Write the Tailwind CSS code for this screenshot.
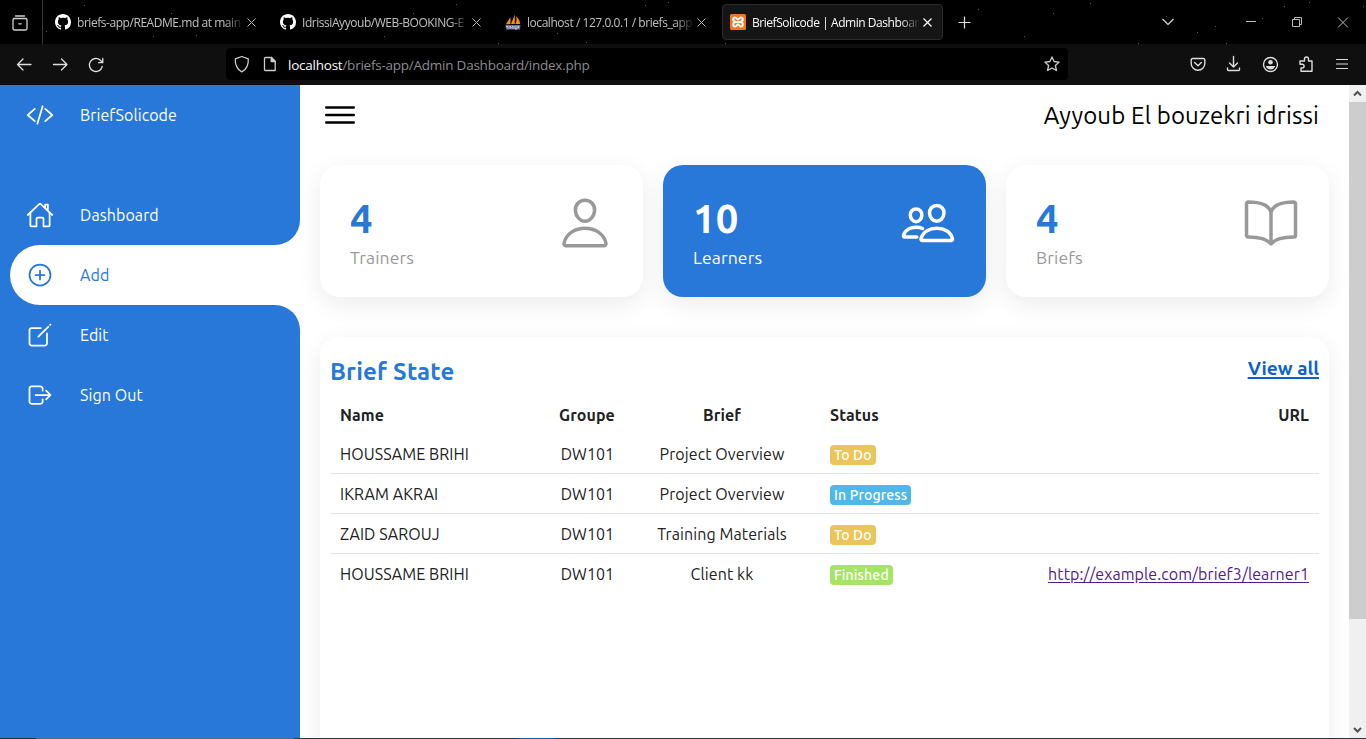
<!DOCTYPE html>
<html lang="en">
<head>
<meta charset="utf-8">
<title>BriefSolicode | Admin Dashboard</title>
<script src="https://cdn.jsdelivr.net/npm/@tailwindcss/browser@4"></script>
</head>
<body class="w-[1366px] h-[739px] overflow-hidden bg-white font-['Ubuntu','Noto_Sans',sans-serif] text-[16px] tracking-[0.09px] text-[#222] flex flex-col">
<header class="relative h-[85px] shrink-0 bg-black font-['Segoe_UI','Open_Sans',sans-serif]">
  <div class="flex h-11 text-[#fbfbfe]/75 text-[12px] tracking-[-0.45px]">
    <div class="w-[43px] border-r border-[#38383d] flex items-center justify-center pr-0.5">
      <svg class="size-4 mt-px" viewBox="0 0 16 16" fill="none" stroke="#d0d0d0" stroke-width="1.3" stroke-linecap="round"><path d="M3.500 1h9"/><path d="M1 5.500V5a1.500 1.500 0 0 1 1.500-1.500h11A1.500 1.500 0 0 1 15 5v8.500a1.500 1.500 0 0 1-1.500 1.500h-11A1.500 1.500 0 0 1 1 13.500zM6.800 8.800h2.400"/></svg>
    </div>
    <div class="flex gap-1 pl-1 pt-1">
      <div class="w-[221px] h-9 flex items-center pl-2 pr-2.5">
        <svg class="size-4 shrink-0" viewBox="0 0 16 16" fill="#fff"><path d="M8 0C3.58 0 0 3.58 0 8c0 3.54 2.29 6.53 5.47 7.59.4.07.55-.17.55-.38 0-.19-.01-.82-.01-1.49-2.01.37-2.53-.49-2.69-.94-.09-.23-.48-.94-.82-1.13-.28-.15-.68-.52-.01-.53.63-.01 1.08.58 1.23.82.72 1.21 1.87.87 2.33.66.07-.52.28-.87.51-1.07-1.78-.2-3.64-.89-3.64-3.95 0-.87.31-1.59.82-2.15-.08-.2-.36-1.02.08-2.12 0 0 .67-.21 2.2.82.64-.18 1.32-.27 2-.27s1.36.09 2 .27c1.53-1.04 2.2-.82 2.2-.82.44 1.1.16 1.92.08 2.12.51.56.82 1.27.82 2.15 0 3.07-1.87 3.75-3.65 3.95.29.25.54.73.54 1.48 0 1.07-.01 1.93-.01 2.2 0 .21.15.46.55.38A8.01 8.01 0 0016 8c0-4.42-3.58-8-8-8z"/></svg>
        <div class="ml-1.5 pt-0.5 w-[168px] shrink-0 overflow-hidden whitespace-nowrap mask-r-from-88%"><span>briefs-app/README.md at main</span></div>
        <svg class="size-[9px] shrink-0 ml-0.5" viewBox="0 0 9 9" stroke="#bbb"><path d="M.5.5l8 8M8.5.5l-8 8"/></svg>
      </div>
      <div class="w-[221px] h-9 flex items-center pl-2 pr-2.5">
        <svg class="size-4 shrink-0" viewBox="0 0 16 16" fill="#fff"><path d="M8 0C3.58 0 0 3.58 0 8c0 3.54 2.29 6.53 5.47 7.59.4.07.55-.17.55-.38 0-.19-.01-.82-.01-1.49-2.01.37-2.53-.49-2.69-.94-.09-.23-.48-.94-.82-1.13-.28-.15-.68-.52-.01-.53.63-.01 1.08.58 1.23.82.72 1.21 1.87.87 2.33.66.07-.52.28-.87.51-1.07-1.78-.2-3.64-.89-3.64-3.95 0-.87.31-1.59.82-2.15-.08-.2-.36-1.02.08-2.12 0 0 .67-.21 2.2.82.64-.18 1.32-.27 2-.27s1.36.09 2 .27c1.53-1.04 2.2-.82 2.2-.82.44 1.1.16 1.92.08 2.12.51.56.82 1.27.82 2.15 0 3.07-1.87 3.75-3.65 3.95.29.25.54.73.54 1.48 0 1.07-.01 1.93-.01 2.2 0 .21.15.46.55.38A8.01 8.01 0 0016 8c0-4.42-3.58-8-8-8z"/></svg>
        <div class="ml-1.5 pt-0.5 w-[168px] shrink-0 overflow-hidden whitespace-nowrap mask-r-from-88%"><span>IdrissiAyyoub/WEB-BOOKING-E</span></div>
        <svg class="size-[9px] shrink-0 ml-0.5" viewBox="0 0 9 9" stroke="#bbb"><path d="M.5.5l8 8M8.5.5l-8 8"/></svg>
      </div>
      <div class="w-[221px] h-9 flex items-center pl-2 pr-2.5">
        <svg class="size-4 shrink-0" viewBox="0 0 16 16"><path d="M.8 10.500L5.500 3v7zM6 10L9.800 .5v9.500zM10.300 10c1.500-2.500 1.500-5 .5-8 3 2.500 4 5 4.300 8z" fill="#f29111"/><path d="M.5 11h15l-.5 4.500H1z" fill="#6c7093"/><path d="M1 12.500h2v2M5 15v-3l1.500 1.500L8 12v3M10 12v3h2v-3M13.500 12v2" stroke="#c3c5d8" fill="none"/></svg>
        <div class="ml-1.5 pt-0.5 w-[168px] shrink-0 overflow-hidden whitespace-nowrap mask-r-from-88%"><span>localhost / 127.0.0.1 / briefs_app</span></div>
        <svg class="size-[9px] shrink-0 ml-0.5" viewBox="0 0 9 9" stroke="#bbb"><path d="M.5.5l8 8M8.5.5l-8 8"/></svg>
      </div>
      <div class="w-[221px] h-9 flex items-center pl-[7px] pr-2.5 rounded bg-[#151515] border border-[#2a2a2a] text-[#fbfbfe]">
        <svg class="size-4 shrink-0" viewBox="0 0 16 16"><rect width="16" height="16" rx="1.5" fill="#f37623"/><path d="M6.400 8H9.600M6.400 8C4.500 8 3.200 7.200 3.200 5.600S4.200 3.500 5.200 3.500C7 3.500 6.600 5.600 8 5.600S9 3.500 10.800 3.500C12 3.500 12.800 4.300 12.800 5.600S11.500 8 9.600 8c1.900 0 3.200.8 3.200 2.400s-1 2.100-2 2.100c-1.800 0-1.400-2.100-2.800-2.100s-1 2.100-2.800 2.100c-1.200 0-2-.8-2-2.100S4.500 8 6.400 8z" fill="none" stroke="#fff" stroke-width="1.900"/></svg>
        <div class="ml-1.5 pt-0.5 w-[168px] shrink-0 overflow-hidden whitespace-nowrap mask-r-from-88%"><span>BriefSolicode | Admin Dashboar</span></div>
        <svg class="size-[9px] shrink-0 ml-[3px]" viewBox="0 0 9 9" stroke="#fff" stroke-width="1.2"><path d="M.5.5l8 8M8.500.5l-8 8"/></svg>
      </div>
    </div>
    <svg class="w-[420px] h-11 shrink-0" viewBox="943 0 420 44" fill="none" stroke="#ddd"><path d="M958.500 22.500h12M964.500 16.500v12" stroke-width="1.200"/><path d="M1162.500 19l5.500 5.500 5.500-5.500" stroke-width="1.200"/><path d="M1246 21.500h10M1292.500 19.500h7v7h-7zM1294.500 19.500v-2h7v7h-2M1338 17.500l10 10M1348 17.500l-10 10" stroke="#bbb"/></svg>
  </div>
  <div class="h-[41px] bg-[#0f0f0f] flex items-center">
    <svg class="w-[226px] h-[41px]" viewBox="0 44 226 41" fill="none" stroke="#ddd" stroke-width="1.300" stroke-linecap="round" stroke-linejoin="round"><path d="M31 64.500H17.500M23 59l-5.500 5.500L23 70M53.500 64.500H67M61.500 59l5.500 5.500-5.500 5.500M102.200 66.500a6.500 6.500 0 1 1-1.800-6.200l2 2M102.800 58.500v4.200h-4.200"/></svg>
    <div class="w-[842px] h-8 rounded bg-black flex items-center text-[13.5px] tracking-[-0.24px] -mt-px">
      <svg class="w-[62px] h-8 shrink-0" viewBox="226 48 62 32" fill="none" stroke="#ccc" stroke-width="1.300" stroke-linejoin="round"><path d="M241.800 56.500l6.500 2.300c.3 5.500-1.500 10.500-6.500 13-5-2.500-6.800-7.500-6.500-13z"/><path d="M265.500 57.500h6l3.700 3.700v9.300h-9.700a1 1 0 0 1-1-1V58.500a1 1 0 0 1 1-1z"/><path d="M271.200 57.500v4h4z" fill="#ccc"/></svg>
      <span class="flex-1 pt-0.5 text-[#8b8b90] whitespace-nowrap"><span class="text-[#fbfbfe]">localhost</span>/briefs-app/Admin Dashboard/index.php</span>
      <svg class="size-4 mr-2" viewBox="0 0 16 16" fill="none" stroke="#ccc" stroke-width="1.300" stroke-linejoin="round"><path d="M8 .9l2.100 4.600 5 .6-3.700 3.400 1 5L8 12l-4.400 2.500 1-5L.9 6.100l5-.6z"/></svg>
    </div>
    <svg class="w-[298px] h-[41px]" viewBox="1068 44 298 41" fill="none" stroke="#ddd" stroke-width="1.400" stroke-linecap="round" stroke-linejoin="round"><path d="M1192.500 58.500h11a1.300 1.300 0 0 1 1.300 1.300v3.700a6.800 6.800 0 0 1-13.600 0v-3.700a1.300 1.300 0 0 1 1.300-1.300zM1194.600 62.500l3.400 3.200 3.400-3.200M1233.500 56.500v10M1229.500 63l4 4 4-4M1227.500 68v1.500a1 1 0 0 0 1 1h10a1 1 0 0 0 1-1V68"/><circle cx="1270.500" cy="64.500" r="7"/><circle cx="1270.500" cy="62.300" r="2.300" fill="#ddd" stroke="none"/><path d="M1266 66h9c-.3 2.300-2 3.500-4.500 3.500s-4.200-1.200-4.500-3.500z" fill="#ddd" stroke="none"/><path d="M1301 61h3.500v-2a2 2 0 0 1 4 0v2h3.500v10.300h-11v-3.300h1.200a1.900 1.900 0 0 0 0-3.800h-2.200V61z"/><path d="M1336.500 59.500h11M1336.500 64h11M1336.500 68.500h11" stroke-width="1.200"/></svg>
  </div>
  <svg class="absolute inset-0 w-[1366px] h-[85px]" viewBox="0 0 1366 85" fill="#555"><path d="M84 5h1v1h-1zM171 13h1v1h-1zM46 31h1v1h-1zM153 36h1v1h-1zM196 35h1v1h-1zM376 27h1v1h-1zM384 36h1v1h-1zM413 13h1v1h-1zM456 4h1v1h-1zM498 43h1v1h-1zM557 33h1v1h-1zM586 42h1v1h-1zM645 5h1v1h-1zM668 2h1v1h-1zM725 43h1v1h-1zM978 9h1v1h-1zM1024 36h1v1h-1zM1053 13h1v1h-1zM1090 3h1v1h-1zM1138 43h1v1h-1zM1166 16h1v1h-1zM1197 32h1v1h-1zM1215 26h1v1h-1zM1226 43h1v1h-1zM1262 18h1v1h-1zM1284 6h1v1h-1zM1309 2h1v1h-1zM1363 6h1v1h-1z"/></svg>
</header>

<div class="flex h-[653px] overflow-hidden">
  <aside class="w-[300px] shrink-0 bg-[#2778d9] pl-2.5 text-white">
    <nav class="flex flex-col">
      <a class="flex h-[60px] items-center mb-10"><svg class="size-7 mx-4" viewBox="0 0 512 512" fill="none" stroke="currentColor" stroke-width="32" stroke-linecap="round" stroke-linejoin="round"><path d="M160 368L32 256l128-112M352 368l128-112-128-112M304 96l-96 320"/></svg><span class="pl-2.5 pb-px">BriefSolicode</span></a>
      <div class="bg-white"><a class="flex h-[60px] items-center bg-[#2778d9] rounded-br-[25px]"><svg class="size-7 mx-4" viewBox="0 0 512 512" fill="none" stroke="currentColor" stroke-width="32" stroke-linecap="round" stroke-linejoin="round"><path d="M80 212v236a16 16 0 0016 16h96V328a24 24 0 0124-24h80a24 24 0 0124 24v136h96a16 16 0 0016-16V212"/><path d="M480 256L266.890 52c-5-5.280-16.690-5.340-21.780 0L32 256M400 179V64h-48v69"/></svg><span class="pl-2.5 pb-px">Dashboard</span></a></div>
      <a class="flex h-[60px] items-center bg-white text-[#2778d9] rounded-l-[30px]"><svg class="size-7 mx-4" viewBox="0 0 512 512" fill="none" stroke="currentColor" stroke-width="32" stroke-linecap="round" stroke-linejoin="round"><path d="M448 256c0-106-86-192-192-192S64 150 64 256s86 192 192 192 192-86 192-192zM256 176v160M336 256H176"/></svg><span class="pl-2.5 pb-px">Add</span></a>
      <div class="bg-white"><a class="flex h-[60px] items-center bg-[#2778d9] rounded-tr-[25px]"><svg class="size-7 mx-4" viewBox="0 0 512 512" fill="none" stroke="currentColor" stroke-width="32" stroke-linecap="round" stroke-linejoin="round"><path d="M384 224v184a40 40 0 01-40 40H104a40 40 0 01-40-40V168a40 40 0 0140-40h167.480"/><path fill="currentColor" stroke="none" d="M459.940 53.250a16.060 16.060 0 00-23.220-.56L424.350 65a8 8 0 000 11.310l11.340 11.320a8 8 0 0011.340 0l12.060-12c6.100-6.090 6.670-16.010.85-22.380zM399.340 90L218.820 270.200a9 9 0 00-2.310 3.930L208.160 299a3.910 3.910 0 004.860 4.860l24.850-8.350a9 9 0 003.930-2.310L422 112.660a9 9 0 000-12.660l-9.950-10a9 9 0 00-12.710 0z"/></svg><span class="pl-2.5 pb-px">Edit</span></a></div>
      <a class="flex h-[60px] items-center"><svg class="size-7 mx-4" viewBox="0 0 512 512" fill="none" stroke="currentColor" stroke-width="32" stroke-linecap="round" stroke-linejoin="round"><path d="M304 336v40a40 40 0 01-40 40H104a40 40 0 01-40-40V136a40 40 0 0140-40h152c22.090 0 48 17.910 48 40v40M368 336l80-80-80-80M176 256h256"/></svg><span class="pl-2.5 pb-px">Sign Out</span></a>
    </nav>
  </aside>

  <main class="w-[1049px] shrink-0 px-5 flex flex-col">
    <div class="h-[60px] shrink-0 flex items-center justify-between pr-2.5 text-black">
      <svg class="size-10" viewBox="0 0 512 512" fill="none" stroke="currentColor" stroke-width="32" stroke-linecap="round"><path d="M80 160h352M80 256h352M80 352h352"/></svg>
      <span class="text-[24px] tracking-[0.15px] pt-0.5">Ayyoub El bouzekri idrissi</span>
    </div>
    <div class="grid grid-cols-3 gap-5 mt-5">
      <div class="h-[132px] rounded-[20px] bg-white p-[30px] flex justify-between shadow-[0_7px_25px_rgba(0,0,0,0.08)]">
        <div><div class="text-[40px] leading-[48px] font-semibold text-[#2778d9]">4</div><div class="text-[17.6px] leading-[28px] text-[#999] mt-px">Trainers</div></div>
        <svg class="size-14 text-[#999]" viewBox="0 0 512 512" fill="none" stroke="currentColor" stroke-width="32" stroke-linecap="round" stroke-linejoin="round"><path d="M344 144c-3.920 52.870-44 96-88 96s-84.150-43.120-88-96c-4-55 35-96 88-96s92 42 88 96z"/><path d="M256 304c-87 0-175.300 48-191.640 138.600C62.390 453.520 68.570 464 80 464h352c11.440 0 17.620-10.480 15.650-21.400C431.300 352 343 304 256 304z"/></svg>
      </div>
      <div class="h-[132px] rounded-[20px] bg-[#2778d9] p-[30px] flex justify-between text-white shadow-[0_7px_25px_rgba(0,0,0,0.08)]">
        <div><div class="text-[40px] leading-[48px] font-semibold">10</div><div class="text-[17.6px] leading-[28px] mt-px">Learners</div></div>
        <svg class="size-14" viewBox="0 0 512 512" fill="none" stroke="currentColor" stroke-width="32" stroke-linecap="round" stroke-linejoin="round"><path d="M402 168c-2.930 40.670-33.100 72-66 72s-63.120-31.320-66-72c-3-42.310 26.370-72 66-72s69 30.460 66 72z"/><path d="M336 304c-65.170 0-127.840 32.370-143.540 95.410-2.080 8.340 3.150 16.590 11.720 16.590h263.650c8.570 0 13.770-8.250 11.720-16.590C463.850 335.360 401.180 304 336 304z"/><path d="M200 185.940c-2.340 32.480-26.720 58.060-53 58.060s-50.700-25.570-53-58.060C91.610 152.150 115.340 128 147 128s55.390 24.770 53 57.940zM206 306c-18.050-8.270-37.930-11.450-59-11.450-52 0-102.100 25.850-114.650 76.200-1.650 6.660 2.530 13.250 9.370 13.250H154"/></svg>
      </div>
      <div class="h-[132px] rounded-[20px] bg-white p-[30px] flex justify-between shadow-[0_7px_25px_rgba(0,0,0,0.08)]">
        <div><div class="text-[40px] leading-[48px] font-semibold text-[#2778d9]">4</div><div class="text-[17.6px] leading-[28px] text-[#999] mt-px">Briefs</div></div>
        <svg class="size-14 text-[#999]" viewBox="0 0 512 512" fill="none" stroke="currentColor" stroke-width="32" stroke-linecap="round" stroke-linejoin="round"><path d="M256 160c16-63.160 76.430-95.410 208-96a15.940 15.940 0 0116 16v288a16 16 0 01-16 16c-128 0-177.450 25.810-208 64-30.370-38-80-64-208-64-9.880 0-16-8.050-16-17.930V80a15.940 15.940 0 0116-16c131.570.59 192 32.840 208 96zM256 160v288"/></svg>
      </div>
    </div>
    <section class="mt-10 h-[500px] shrink-0 rounded-[20px] bg-white shadow-[0_7px_25px_rgba(0,0,0,0.08)] px-2.5 pt-5">
      <div class="flex justify-between items-start h-[39px]">
        <h2 class="text-[24px] leading-[30px] font-semibold text-[#2778d9] tracking-[0.2px]">Brief State</h2>
        <a class="text-[19px] leading-[22px] font-semibold text-[#0b62cc] underline decoration-2 underline-offset-2 tracking-normal">View all</a>
      </div>
      <table class="w-full table-fixed border-separate border-spacing-0 leading-5">
        <colgroup><col class="w-[204px]"><col class="w-[106px]"><col class="w-[164px]"><col class="w-[140px]"><col></colgroup>
        <thead><tr class="h-[38px] font-semibold"><td class="px-2.5">Name</td><td class="text-center">Groupe</td><td class="text-center">Brief</td><td class="pl-[26px]">Status</td><td class="px-2.5 text-right">URL</td></tr></thead>
        <tbody>
          <tr class="h-10 *:border-b *:border-black/10"><td class="px-2.5">HOUSSAME BRIHI</td><td class="text-center pl-px">DW101</td><td class="text-center">Project Overview</td><td class="pl-[26px]"><span class="block w-fit mt-0.5 h-5 px-1 rounded bg-[#e9c55c] text-white text-[14px] font-medium">To Do</span></td><td></td></tr>
          <tr class="h-10 *:border-b *:border-black/10"><td class="px-2.5">IKRAM AKRAI</td><td class="text-center pl-px">DW101</td><td class="text-center">Project Overview</td><td class="pl-[26px]"><span class="block w-fit mt-0.5 h-5 px-1 rounded bg-[#50b8e9] text-white text-[14px] font-medium tracking-[0.15px]">In Progress</span></td><td></td></tr>
          <tr class="h-10 *:border-b *:border-black/10"><td class="px-2.5">ZAID SAROUJ</td><td class="text-center pl-px">DW101</td><td class="text-center">Training Materials</td><td class="pl-[26px]"><span class="block w-fit mt-0.5 h-5 px-1 rounded bg-[#e9c55c] text-white text-[14px] font-medium">To Do</span></td><td></td></tr>
          <tr class="h-10 *:border-b *:border-transparent"><td class="px-2.5">HOUSSAME BRIHI</td><td class="text-center pl-px">DW101</td><td class="text-center">Client kk</td><td class="pl-[26px]"><span class="block w-fit mt-0.5 h-5 px-1 rounded bg-[#a6e563] text-white text-[14px] font-medium tracking-[0.18px]">Finished</span></td><td class="px-2.5 text-right"><a class="text-[#551a8b] underline underline-offset-2">http://example.com/brief3/learner1</a></td></tr>
        </tbody>
      </table>
    </section>
  </main>

  <div class="relative z-10 w-[17px] shrink-0 bg-[#f0f0f0] flex flex-col">
    <svg class="size-[17px]" viewBox="0 0 17 17" fill="none" stroke="#505050" stroke-width="2"><path d="M5 10.500L8.500 7l3.500 3.500"/></svg>
    <div class="h-[517px] bg-[#cdcdcd]"></div>
    <svg class="size-[17px] mt-auto" viewBox="0 0 17 17" fill="none" stroke="#505050" stroke-width="2"><path d="M5 7l3.500 3.500L12 7"/></svg>
  </div>
</div>
<footer class="h-px shrink-0 flex bg-[#25384a]"><div class="w-9 bg-[#1c2b44]"></div><div class="w-[258px] bg-[#4f6a86]"></div><div class="w-[225px]"></div><div class="w-9 bg-[#0067b0]"></div></footer>
</body>
</html>
